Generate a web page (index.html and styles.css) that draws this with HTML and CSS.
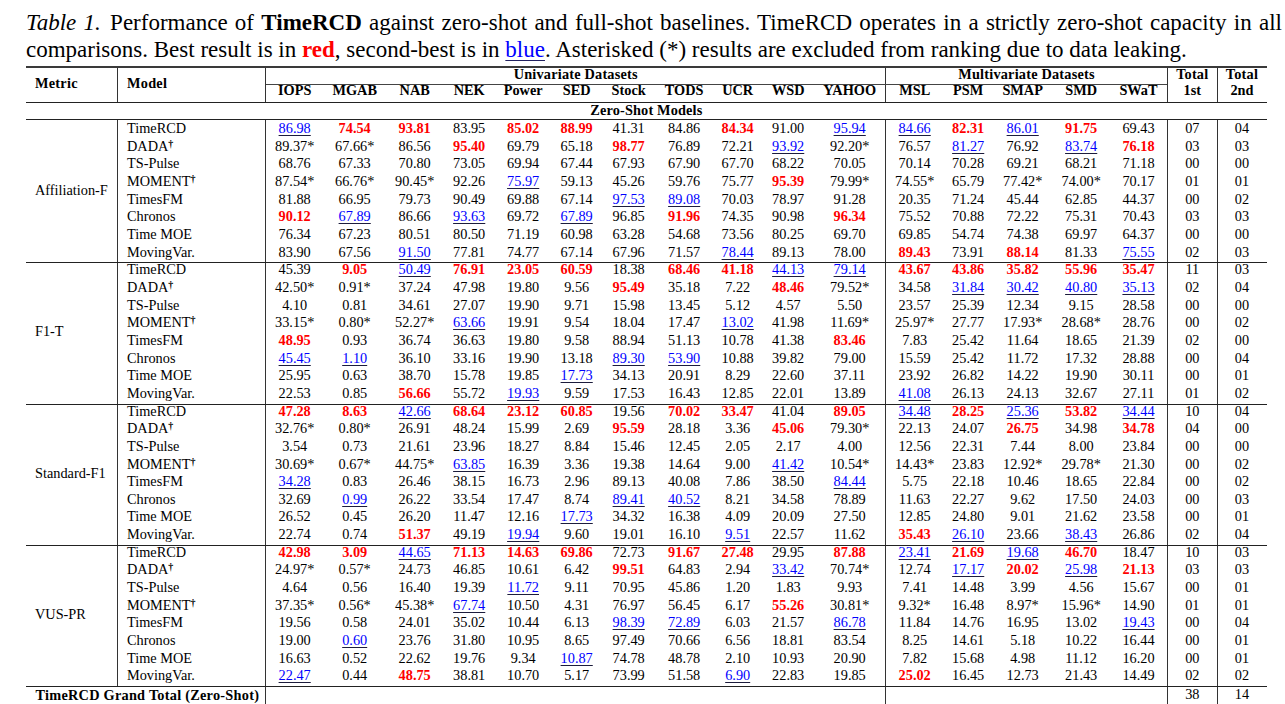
FILE: index.html
```html
<!DOCTYPE html>
<html lang="en">
<head>
<meta charset="utf-8">
<title>Table 1 - TimeRCD</title>
<link rel="stylesheet" href="styles.css">
</head>
<body>
<div class="page">
  <p class="caption">
    <span class="l1"><i class="lab">Table 1.</i> Performance of <b>TimeRCD</b> against zero-shot and full-shot baselines. TimeRCD operates in a strictly zero-shot capacity in all</span>
    <span class="l2">comparisons. Best result is in <b class="cred">red</b>, second-best is in <span class="cblue">blue</span>. Asterisked (*) results are excluded from ranking due to data leaking.</span>
  </p>

  <div class="tbl">
    <div class="head">
      <div class="hl">Metric</div>
      <div class="hl hmod">Model</div>
      <div class="h1 cm s11">Univariate Datasets</div>
      <div class="h1 cm s5">Multivariate Datasets</div>
      <div class="h1">Total</div>
      <div class="h1">Total</div>
      <div class="h2">IOPS</div><div class="h2">MGAB</div><div class="h2">NAB</div><div class="h2">NEK</div><div class="h2">Power</div><div class="h2">SED</div><div class="h2">Stock</div><div class="h2">TODS</div><div class="h2">UCR</div><div class="h2">WSD</div><div class="h2">YAHOO</div>
      <div class="h2">MSL</div><div class="h2">PSM</div><div class="h2">SMAP</div><div class="h2">SMD</div><div class="h2">SWaT</div>
      <div class="h2">1st</div><div class="h2">2nd</div>
    </div>

    <div class="zs">Zero-Shot Models</div>

    <div class="grp g1">
      <div class="met">Affiliation-F</div>
      <span class="m">TimeRCD</span><span class="u">86.98</span><span class="r">74.54</span><span class="r">93.81</span><span>83.95</span><span class="r">85.02</span><span class="r">88.99</span><span>41.31</span><span>84.86</span><span class="r">84.34</span><span>91.00</span><span class="u">95.94</span><span class="u">84.66</span><span class="r">82.31</span><span class="u">86.01</span><span class="r">91.75</span><span>69.43</span><span>07</span><span>04</span>
      <span class="m">DADA<sup class="dag">†</sup></span><span>89.37*</span><span>67.66*</span><span>86.56</span><span class="r">95.40</span><span>69.79</span><span>65.18</span><span class="r">98.77</span><span>76.89</span><span>72.21</span><span class="u">93.92</span><span>92.20*</span><span>76.57</span><span class="u">81.27</span><span>76.92</span><span class="u">83.74</span><span class="r">76.18</span><span>03</span><span>03</span>
      <span class="m">TS-Pulse</span><span>68.76</span><span>67.33</span><span>70.80</span><span>73.05</span><span>69.94</span><span>67.44</span><span>67.93</span><span>67.90</span><span>67.70</span><span>68.22</span><span>70.05</span><span>70.14</span><span>70.28</span><span>69.21</span><span>68.21</span><span>71.18</span><span>00</span><span>00</span>
      <span class="m">MOMENT<sup class="dag">†</sup></span><span>87.54*</span><span>66.76*</span><span>90.45*</span><span>92.26</span><span class="u">75.97</span><span>59.13</span><span>45.26</span><span>59.76</span><span>75.77</span><span class="r">95.39</span><span>79.99*</span><span>74.55*</span><span>65.79</span><span>77.42*</span><span>74.00*</span><span>70.17</span><span>01</span><span>01</span>
      <span class="m">TimesFM</span><span>81.88</span><span>66.95</span><span>79.73</span><span>90.49</span><span>69.88</span><span>67.14</span><span class="u">97.53</span><span class="u">89.08</span><span>70.03</span><span>78.97</span><span>91.28</span><span>20.35</span><span>71.24</span><span>45.44</span><span>62.85</span><span>44.37</span><span>00</span><span>02</span>
      <span class="m">Chronos</span><span class="r">90.12</span><span class="u">67.89</span><span>86.66</span><span class="u">93.63</span><span>69.72</span><span class="u">67.89</span><span>96.85</span><span class="r">91.96</span><span>74.35</span><span>90.98</span><span class="r">96.34</span><span>75.52</span><span>70.88</span><span>72.22</span><span>75.31</span><span>70.43</span><span>03</span><span>03</span>
      <span class="m">Time MOE</span><span>76.34</span><span>67.23</span><span>80.51</span><span>80.50</span><span>71.19</span><span>60.98</span><span>63.28</span><span>54.68</span><span>73.56</span><span>80.25</span><span>69.70</span><span>69.85</span><span>54.74</span><span>74.38</span><span>69.97</span><span>64.37</span><span>00</span><span>00</span>
      <span class="m">MovingVar.</span><span>83.90</span><span>67.56</span><span class="u">91.50</span><span>77.81</span><span>74.77</span><span>67.14</span><span>67.96</span><span>71.57</span><span class="u">78.44</span><span>89.13</span><span>78.00</span><span class="r">89.43</span><span>73.91</span><span class="r">88.14</span><span>81.33</span><span class="u">75.55</span><span>02</span><span>03</span>
    </div>

    <div class="grp">
      <div class="met">F1-T</div>
      <span class="m">TimeRCD</span><span>45.39</span><span class="r">9.05</span><span class="u">50.49</span><span class="r">76.91</span><span class="r">23.05</span><span class="r">60.59</span><span>18.38</span><span class="r">68.46</span><span class="r">41.18</span><span class="u">44.13</span><span class="u">79.14</span><span class="r">43.67</span><span class="r">43.86</span><span class="r">35.82</span><span class="r">55.96</span><span class="r">35.47</span><span>11</span><span>03</span>
      <span class="m">DADA<sup class="dag">†</sup></span><span>42.50*</span><span>0.91*</span><span>37.24</span><span>47.98</span><span>19.80</span><span>9.56</span><span class="r">95.49</span><span>35.18</span><span>7.22</span><span class="r">48.46</span><span>79.52*</span><span>34.58</span><span class="u">31.84</span><span class="u">30.42</span><span class="u">40.80</span><span class="u">35.13</span><span>02</span><span>04</span>
      <span class="m">TS-Pulse</span><span>4.10</span><span>0.81</span><span>34.61</span><span>27.07</span><span>19.90</span><span>9.71</span><span>15.98</span><span>13.45</span><span>5.12</span><span>4.57</span><span>5.50</span><span>23.57</span><span>25.39</span><span>12.34</span><span>9.15</span><span>28.58</span><span>00</span><span>00</span>
      <span class="m">MOMENT<sup class="dag">†</sup></span><span>33.15*</span><span>0.80*</span><span>52.27*</span><span class="u">63.66</span><span>19.91</span><span>9.54</span><span>18.04</span><span>17.47</span><span class="u">13.02</span><span>41.98</span><span>11.69*</span><span>25.97*</span><span>27.77</span><span>17.93*</span><span>28.68*</span><span>28.76</span><span>00</span><span>02</span>
      <span class="m">TimesFM</span><span class="r">48.95</span><span>0.93</span><span>36.74</span><span>36.63</span><span>19.80</span><span>9.58</span><span>88.94</span><span>51.13</span><span>10.78</span><span>41.38</span><span class="r">83.46</span><span>7.83</span><span>25.42</span><span>11.64</span><span>18.65</span><span>21.39</span><span>02</span><span>00</span>
      <span class="m">Chronos</span><span class="u">45.45</span><span class="u">1.10</span><span>36.10</span><span>33.16</span><span>19.90</span><span>13.18</span><span class="u">89.30</span><span class="u">53.90</span><span>10.88</span><span>39.82</span><span>79.00</span><span>15.59</span><span>25.42</span><span>11.72</span><span>17.32</span><span>28.88</span><span>00</span><span>04</span>
      <span class="m">Time MOE</span><span>25.95</span><span>0.63</span><span>38.70</span><span>15.78</span><span>19.85</span><span class="u">17.73</span><span>34.13</span><span>20.91</span><span>8.29</span><span>22.60</span><span>37.11</span><span>23.92</span><span>26.82</span><span>14.22</span><span>19.90</span><span>30.11</span><span>00</span><span>01</span>
      <span class="m">MovingVar.</span><span>22.53</span><span>0.85</span><span class="r">56.66</span><span>55.72</span><span class="u">19.93</span><span>9.59</span><span>17.53</span><span>16.43</span><span>12.85</span><span>22.01</span><span>13.89</span><span class="u">41.08</span><span>26.13</span><span>24.13</span><span>32.67</span><span>27.11</span><span>01</span><span>02</span>
    </div>

    <div class="grp">
      <div class="met">Standard-F1</div>
      <span class="m">TimeRCD</span><span class="r">47.28</span><span class="r">8.63</span><span class="u">42.66</span><span class="r">68.64</span><span class="r">23.12</span><span class="r">60.85</span><span>19.56</span><span class="r">70.02</span><span class="r">33.47</span><span>41.04</span><span class="r">89.05</span><span class="u">34.48</span><span class="r">28.25</span><span class="u">25.36</span><span class="r">53.82</span><span class="u">34.44</span><span>10</span><span>04</span>
      <span class="m">DADA<sup class="dag">†</sup></span><span>32.76*</span><span>0.80*</span><span>26.91</span><span>48.24</span><span>15.99</span><span>2.69</span><span class="r">95.59</span><span>28.18</span><span>3.36</span><span class="r">45.06</span><span>79.30*</span><span>22.13</span><span>24.07</span><span class="r">26.75</span><span>34.98</span><span class="r">34.78</span><span>04</span><span>00</span>
      <span class="m">TS-Pulse</span><span>3.54</span><span>0.73</span><span>21.61</span><span>23.96</span><span>18.27</span><span>8.84</span><span>15.46</span><span>12.45</span><span>2.05</span><span>2.17</span><span>4.00</span><span>12.56</span><span>22.31</span><span>7.44</span><span>8.00</span><span>23.84</span><span>00</span><span>00</span>
      <span class="m">MOMENT<sup class="dag">†</sup></span><span>30.69*</span><span>0.67*</span><span>44.75*</span><span class="u">63.85</span><span>16.39</span><span>3.36</span><span>19.38</span><span>14.64</span><span>9.00</span><span class="u">41.42</span><span>10.54*</span><span>14.43*</span><span>23.83</span><span>12.92*</span><span>29.78*</span><span>21.30</span><span>00</span><span>02</span>
      <span class="m">TimesFM</span><span class="u">34.28</span><span>0.83</span><span>26.46</span><span>38.15</span><span>16.73</span><span>2.96</span><span>89.13</span><span>40.08</span><span>7.86</span><span>38.50</span><span class="u">84.44</span><span>5.75</span><span>22.18</span><span>10.46</span><span>18.65</span><span>22.84</span><span>00</span><span>02</span>
      <span class="m">Chronos</span><span>32.69</span><span class="u">0.99</span><span>26.22</span><span>33.54</span><span>17.47</span><span>8.74</span><span class="u">89.41</span><span class="u">40.52</span><span>8.21</span><span>34.58</span><span>78.89</span><span>11.63</span><span>22.27</span><span>9.62</span><span>17.50</span><span>24.03</span><span>00</span><span>03</span>
      <span class="m">Time MOE</span><span>26.52</span><span>0.45</span><span>26.20</span><span>11.47</span><span>12.16</span><span class="u">17.73</span><span>34.32</span><span>16.38</span><span>4.09</span><span>20.09</span><span>27.50</span><span>12.85</span><span>24.80</span><span>9.01</span><span>21.62</span><span>23.58</span><span>00</span><span>01</span>
      <span class="m">MovingVar.</span><span>22.74</span><span>0.74</span><span class="r">51.37</span><span>49.19</span><span class="u">19.94</span><span>9.60</span><span>19.01</span><span>16.10</span><span class="u">9.51</span><span>22.57</span><span>11.62</span><span class="r">35.43</span><span class="u">26.10</span><span>23.66</span><span class="u">38.43</span><span>26.86</span><span>02</span><span>04</span>
    </div>

    <div class="grp">
      <div class="met">VUS-PR</div>
      <span class="m">TimeRCD</span><span class="r">42.98</span><span class="r">3.09</span><span class="u">44.65</span><span class="r">71.13</span><span class="r">14.63</span><span class="r">69.86</span><span>72.73</span><span class="r">91.67</span><span class="r">27.48</span><span>29.95</span><span class="r">87.88</span><span class="u">23.41</span><span class="r">21.69</span><span class="u">19.68</span><span class="r">46.70</span><span>18.47</span><span>10</span><span>03</span>
      <span class="m">DADA<sup class="dag">†</sup></span><span>24.97*</span><span>0.57*</span><span>24.73</span><span>46.85</span><span>10.61</span><span>6.42</span><span class="r">99.51</span><span>64.83</span><span>2.94</span><span class="u">33.42</span><span>70.74*</span><span>12.74</span><span class="u">17.17</span><span class="r">20.02</span><span class="u">25.98</span><span class="r">21.13</span><span>03</span><span>03</span>
      <span class="m">TS-Pulse</span><span>4.64</span><span>0.56</span><span>16.40</span><span>19.39</span><span class="u">11.72</span><span>9.11</span><span>70.95</span><span>45.86</span><span>1.20</span><span>1.83</span><span>9.93</span><span>7.41</span><span>14.48</span><span>3.99</span><span>4.56</span><span>15.67</span><span>00</span><span>01</span>
      <span class="m">MOMENT<sup class="dag">†</sup></span><span>37.35*</span><span>0.56*</span><span>45.38*</span><span class="u">67.74</span><span>10.50</span><span>4.31</span><span>76.97</span><span>56.45</span><span>6.17</span><span class="r">55.26</span><span>30.81*</span><span>9.32*</span><span>16.48</span><span>8.97*</span><span>15.96*</span><span>14.90</span><span>01</span><span>01</span>
      <span class="m">TimesFM</span><span>19.56</span><span>0.58</span><span>24.01</span><span>35.02</span><span>10.44</span><span>6.13</span><span class="u">98.39</span><span class="u">72.89</span><span>6.03</span><span>21.57</span><span class="u">86.78</span><span>11.84</span><span>14.76</span><span>16.95</span><span>13.02</span><span class="u">19.43</span><span>00</span><span>04</span>
      <span class="m">Chronos</span><span>19.00</span><span class="u">0.60</span><span>23.76</span><span>31.80</span><span>10.95</span><span>8.65</span><span>97.49</span><span>70.66</span><span>6.56</span><span>18.81</span><span>83.54</span><span>8.25</span><span>14.61</span><span>5.18</span><span>10.22</span><span>16.44</span><span>00</span><span>01</span>
      <span class="m">Time MOE</span><span>16.63</span><span>0.52</span><span>22.62</span><span>19.76</span><span>9.34</span><span class="u">10.87</span><span>74.78</span><span>48.78</span><span>2.10</span><span>10.93</span><span>20.90</span><span>7.82</span><span>15.68</span><span>4.98</span><span>11.12</span><span>16.20</span><span>00</span><span>01</span>
      <span class="m">MovingVar.</span><span class="u">22.47</span><span>0.44</span><span class="r">48.75</span><span>38.81</span><span>10.70</span><span>5.17</span><span>73.99</span><span>51.58</span><span class="u">6.90</span><span>22.83</span><span>19.85</span><span class="r">25.02</span><span>16.45</span><span>12.73</span><span>21.43</span><span>14.49</span><span>02</span><span>02</span>
    </div>

    <div class="grand">
      <div class="gt">TimeRCD Grand Total (Zero-Shot)</div>
      <div class="s11"></div>
      <div class="s5"></div>
      <span>38</span><span>14</span>
    </div>
  </div>
</div>
</body>
</html>
```

FILE: styles.css
```css
* {
  box-sizing: border-box;
}

html, body {
  margin: 0;
  background: #ffffff;
  color: #000000;
}

body {
  font-family: "Liberation Serif", "Times New Roman", Times, serif;
  overflow: hidden;
}

.page {
  padding: 8.7px 0 0 26px;
}

/* ---------- caption ---------- */
.caption {
  width: 1256px;
  margin: 0;
  font-size: 23px;
  line-height: 27px;
}

.caption .l1 {
  display: block;
  text-align: justify;
  text-align-last: justify;
}

.caption .l2 {
  display: block;
  white-space: nowrap;
}

.lab {
  font-style: italic;
  margin-right: 2px;
}

.cred {
  color: #ff0000;
  font-weight: bold;
}

.cblue {
  color: #0000ff;
  text-decoration: underline;
  text-decoration-color: #202060;
  text-decoration-thickness: 1px;
  text-underline-offset: 3px;
}

/* ---------- table ---------- */
.tbl {
  --cols: 91.7px 148px 58px 62px 58px 51px 57px 50px 54px 57px 50px 51px 72px 58px 49px 60px 57px 57.6px 50px 49.4px;
  --vl: #333333;
  --rule: #222222;
  margin-top: 3.3px;
  width: 1240.7px;
  font-size: 14.3px;
}

.head,
.grp,
.grand {
  display: grid;
  grid-template-columns: var(--cols);
}

/* vertical rules drawn across each section */
.head,
.grp {
  background:
    linear-gradient(var(--vl), var(--vl)) 91px 0 / 1px 100% no-repeat,
    linear-gradient(var(--vl), var(--vl)) 239px 0 / 1px 100% no-repeat,
    linear-gradient(var(--vl), var(--vl)) 859px 0 / 1px 100% no-repeat,
    linear-gradient(var(--vl), var(--vl)) 1141px 0 / 1px 100% no-repeat,
    linear-gradient(var(--vl), var(--vl)) 1191px 0 / 1px 100% no-repeat;
}

.grand {
  background:
    linear-gradient(var(--vl), var(--vl)) 239px 0 / 1px 100% no-repeat,
    linear-gradient(var(--vl), var(--vl)) 859px 0 / 1px 100% no-repeat,
    linear-gradient(var(--vl), var(--vl)) 1141px 0 / 1px 100% no-repeat,
    linear-gradient(var(--vl), var(--vl)) 1191px 0 / 1px 100% no-repeat;
}

/* header */
.head {
  border-top: 2px solid #3a3a3a;
  grid-template-rows: 17.2px 16.4px;
  font-weight: bold;
  text-align: center;
  white-space: nowrap;
}

.hl {
  grid-row: span 2;
  text-align: left;
  padding: 7.6px 0 0 9px;
  line-height: 14px;
  letter-spacing: 0.25px;
}

.hmod {
  padding-left: 9.3px;
}

.h1 {
  line-height: 12.6px;
  letter-spacing: 0.2px;
}

.h2 {
  line-height: 11.6px;
}

.s11 {
  grid-column: span 11;
}

.s5 {
  grid-column: span 5;
}

.cm {
  border-bottom: 1px solid #444444;
}

/* zero-shot band */
.zs {
  height: 18.7px;
  border-top: 1px solid var(--rule);
  border-bottom: 1px solid var(--rule);
  text-align: center;
  font-weight: bold;
  line-height: 14px;
  letter-spacing: 0.15px;
}

/* data groups */
.grp {
  grid-auto-rows: 17.66px;
  white-space: nowrap;
}

.grp.g1 {
  padding-top: 0.8px;
}

.grp + .grp {
  box-shadow: inset 0 1px 0 var(--rule);
}

.grp > span,
.grand > span {
  line-height: 14px;
  text-align: center;
}

.grp > .m {
  text-align: left;
  padding-left: 9.3px;
}

.met {
  grid-row: span 8;
  display: flex;
  align-items: center;
  padding: 0 0 3px 9px;
  line-height: 14px;
}

.r {
  color: #ff0000;
  font-weight: bold;
}

.u {
  color: #0000ff;
  text-decoration: underline;
  text-decoration-color: #1c1c3c;
  text-decoration-thickness: 1px;
  text-underline-offset: 2px;
}

.dag {
  font-size: 10px;
  font-weight: bold;
  line-height: 0;
  vertical-align: 4.5px;
}

/* grand total */
.grand {
  border-top: 1px solid var(--rule);
  grid-template-rows: 18px;
}

.gt {
  grid-column: span 2;
  font-weight: bold;
  line-height: 14px;
  padding: 1px 0 0 9.5px;
  white-space: nowrap;
  letter-spacing: 0.25px;
}
```
